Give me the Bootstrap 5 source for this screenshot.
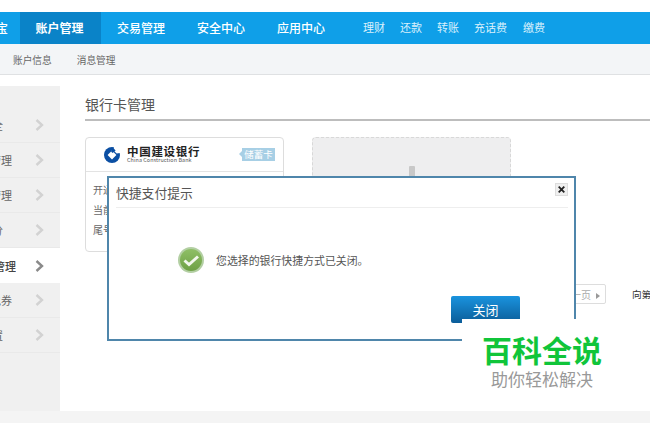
<!DOCTYPE html>
<html lang="zh"><head><meta charset="utf-8"><title>银行卡管理</title>
<link href="https://cdn.jsdelivr.net/npm/bootstrap@5.3.0/dist/css/bootstrap.min.css" rel="stylesheet">
<style>
html,body{height:423px;overflow:hidden;background:#fff}
body{font-family:"Noto Sans CJK SC","Liberation Sans",sans-serif;color:#555;position:relative;font-size:10px}
.topgap{height:12px}
.bluebar{height:32px;background:#0f9fe8;color:#fff;font-size:12px;font-weight:500}
.bluebar span{display:block;white-space:nowrap}
.b0{width:20px;line-height:32px;text-indent:-4px;overflow:hidden}
.bact{width:81px;background:#0a83c8;line-height:32px;text-align:center;font-weight:700;padding-right:2px}
.bt{width:48px;margin-left:32px;line-height:32px}
.bt.first{margin-left:16px}
.qk{font-weight:400;font-size:11px;line-height:31px;margin-left:15px;color:#d9f0fc}
.qk.first{margin-left:38px}
.qk.last{margin-left:16px}
.subbar{height:31px;background:#f3f5f7;border-bottom:1px solid #dfe1e3;line-height:32px;font-size:9.7px;color:#666;padding-left:13px}
.subbar span+span{margin-left:25px}
.pagebody{height:336px}
.sidecol{width:60px;margin-top:11px;background:#f0f0f0;padding-top:22px;flex:none}
.siderow{height:35px;border-bottom:1px solid #e9e9e9;font-size:11px;color:#666;line-height:36px}
.siderow.on{background:#fff;color:#444;font-weight:500;border-bottom:0}
.sidetxt{width:12px;overflow:hidden;display:flex;justify-content:flex-end;white-space:nowrap;flex:none}
.sidetxt.sliver{width:3px}
.sidetxt.wide{width:16px}
.chev{margin-left:auto;margin-right:16px;flex:none;color:#d2d2d2}
.on .chev{color:#8a8a8a}
.maincol{padding-left:25px;min-width:0;flex:1;white-space:nowrap;overflow:hidden}
.headline{margin-top:19px;height:27px;border-bottom:2px solid #bdbdbd;font-size:14px;color:#555;line-height:20px}
.cardsrow{margin-top:16px;gap:28px}
.bankbox{width:199px;height:115px;border:1px solid #ddd;border-radius:4px;background:#fff;flex:none}
.bankhead{height:34px;border-bottom:1px solid #e3e3e3;padding-left:18px}
.banklogo{margin-right:7px;flex:none}
.bankname{font-size:11.5px;font-weight:700;color:#222;line-height:11px;letter-spacing:.7px}
.banken{font-size:5.4px;color:#555;line-height:7px;letter-spacing:.1px}
.banktag{background:#a7cfe5;color:#fff;font-size:9.5px;line-height:13px;width:33px;text-align:center;margin-left:auto;margin-right:8px;position:relative;flex:none}
.banktag::before{content:"";position:absolute;left:-3px;top:3px;border:3.5px solid transparent;border-right:3px solid #a7cfe5;border-left:0}
.bankline{margin:0 0 0 7px;font-size:10px;line-height:20px;color:#666}
.addbox{width:199px;height:115px;border:1px dashed #d8d8d8;border-radius:4px;background:#eeeeef;display:flex;justify-content:center;padding-top:28px;flex:none}
.plusbar{width:6px;height:40px;background:#c8c8c8;border-radius:1px}
.pagerrow{margin-top:32px}
.pagerbtn{margin-left:440px;width:81px;height:20px;border:1px solid #ddd;border-radius:2px;text-align:right;padding-right:5px;line-height:19px;font-size:10px;color:#aaa;flex:none}
.pagerbtn i{display:inline-block;border-left:4px solid #999;border-top:3.5px solid transparent;border-bottom:3.5px solid transparent;margin-left:5px}
.jumptxt{margin-left:26px;line-height:20px;font-size:9.6px;color:#333;flex:none}
.footstrip{height:13px;background:#f4f4f4}
.dlgbox{position:absolute;left:107px;top:176px;width:469px;height:165px;border:2px solid #4f86ab;background:#fff}
.dlgtitle{margin:0 6px 0 7px;height:30px;border-bottom:1px solid #eeeeee;font-size:12.8px;color:#555;line-height:29px}
.dlgx{width:13px;height:13px;background:#efefef;border:1px solid #ddd;margin-top:5px}
.dlgmsg{margin:39px 0 0 69px;font-size:10.9px;line-height:26px;color:#555;gap:12px}
.dlgbtn{position:absolute;left:342px;top:118px;width:69px;height:27px;background:linear-gradient(#1a93de,#0b5d99);color:#fff;font-size:13px;text-align:center;line-height:28px;border-radius:2px}
.wmark{position:absolute;left:462px;top:319px;width:168px;height:81px;background:#fff;text-align:left;padding-left:20px}
.wmtop{font-size:30px;font-weight:700;color:#10c53a;line-height:36px;margin-top:12px;white-space:nowrap}
.wmsub{font-size:17px;color:#999;line-height:22px;padding-left:9px;margin-top:1px;white-space:nowrap}
</style></head><body>
<div class="topgap"></div>
<div class="bluebar d-flex">
  <span class="b0">宝</span>
  <span class="bact">账户管理</span>
  <span class="bt first">交易管理</span><span class="bt">安全中心</span><span class="bt">应用中心</span>
  <span class="qk first">理财</span><span class="qk">还款</span><span class="qk">转账</span><span class="qk">充话费</span><span class="qk last">缴费</span>
</div>
<div class="subbar"><span>账户信息</span><span>消息管理</span></div>
<div class="pagebody d-flex">
  <div class="sidecol">
    <div class="siderow d-flex align-items-center"><div class="sidetxt sliver">安全</div><svg class="chev" width="9" height="12" viewBox="0 0 9 12"><path d="M1.5 1 7 6 1.5 11" fill="none" stroke="currentColor" stroke-width="2.4"/></svg></div>
    <div class="siderow d-flex align-items-center"><div class="sidetxt">管理</div><svg class="chev" width="9" height="12" viewBox="0 0 9 12"><path d="M1.5 1 7 6 1.5 11" fill="none" stroke="currentColor" stroke-width="2.4"/></svg></div>
    <div class="siderow d-flex align-items-center"><div class="sidetxt">管理</div><svg class="chev" width="9" height="12" viewBox="0 0 9 12"><path d="M1.5 1 7 6 1.5 11" fill="none" stroke="currentColor" stroke-width="2.4"/></svg></div>
    <div class="siderow d-flex align-items-center"><div class="sidetxt sliver">积分</div><svg class="chev" width="9" height="12" viewBox="0 0 9 12"><path d="M1.5 1 7 6 1.5 11" fill="none" stroke="currentColor" stroke-width="2.4"/></svg></div>
    <div class="siderow on d-flex align-items-center"><div class="sidetxt wide">管理</div><svg class="chev" width="9" height="12" viewBox="0 0 9 12"><path d="M1.5 1 7 6 1.5 11" fill="none" stroke="currentColor" stroke-width="2.4"/></svg></div>
    <div class="siderow d-flex align-items-center"><div class="sidetxt">红包券</div><svg class="chev" width="9" height="12" viewBox="0 0 9 12"><path d="M1.5 1 7 6 1.5 11" fill="none" stroke="currentColor" stroke-width="2.4"/></svg></div>
    <div class="siderow d-flex align-items-center"><div class="sidetxt sliver">设置</div><svg class="chev" width="9" height="12" viewBox="0 0 9 12"><path d="M1.5 1 7 6 1.5 11" fill="none" stroke="currentColor" stroke-width="2.4"/></svg></div>
  </div>
  <div class="maincol">
    <div class="headline">银行卡管理</div>
    <div class="cardsrow d-flex">
      <div class="bankbox">
        <div class="bankhead d-flex align-items-center">
          <svg width="16" height="16" viewBox="0 0 16 16" class="banklogo"><circle cx="8" cy="8" r="8" fill="#0b4fa3"/><path d="M8 3.6 12.4 8 8 12.4 3.6 8Z" fill="#fff"/><path d="M10 0 16 0 16 6 12.7 6.6 9.6 3.4Z" fill="#fff"/><path d="M9.6 1.2 11.6 3.4 8.6 6 7 4.4Z" fill="#0b4fa3"/></svg>
          <div><div class="bankname">中国建设银行</div><div class="banken">China Construction Bank</div></div>
          <div class="banktag">储蓄卡</div>
        </div>
        <div class="pt-2"><p class="bankline">开通日期</p><p class="bankline">当前状态</p><p class="bankline">尾号信息</p></div>
      </div>
      <div class="addbox"><div class="plusbar"></div></div>
    </div>
    <div class="pagerrow d-flex">
      <div class="pagerbtn">下一页<i></i></div>
      <div class="jumptxt">向第1页</div>
    </div>
  </div>
</div>
<div class="footstrip"></div>

<div class="dlgbox">
  <div class="dlgtitle d-flex justify-content-between">
    <span>快捷支付提示</span>
    <div class="dlgx d-flex align-items-center justify-content-center"><svg width="7" height="7" viewBox="0 0 7 7"><path d="M.7.7 6.3 6.3M6.3.7.7 6.3" stroke="#222" stroke-width="1.8"/></svg></div>
  </div>
  <div class="dlgmsg d-flex align-items-center">
    <svg width="26" height="26" viewBox="0 0 26 26"><defs><linearGradient id="gg" x1="0" y1="0" x2="0" y2="1"><stop offset="0" stop-color="#8fbf66"/><stop offset="1" stop-color="#6ea044"/></linearGradient></defs><circle cx="13" cy="13" r="13" fill="#b3cfa3"/><circle cx="13" cy="13" r="11" fill="url(#gg)"/><path d="M6.5 13.5 11 17.5 20 9.5" fill="none" stroke="#f2f7ec" stroke-width="3"/></svg>
    <span>您选择的银行快捷方式已关闭。</span>
  </div>
  <div class="dlgbtn">关闭</div>
</div>
<div class="wmark"><div class="wmtop">百科全说</div><div class="wmsub">助你轻松解决</div></div>
</body></html>
